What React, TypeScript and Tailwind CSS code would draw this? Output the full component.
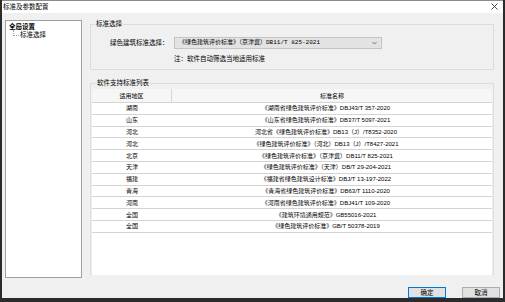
import React from "react";

// ── Data ───────────────────────────────────────────────────────────────────

const ROWS = [
  { area: "湖南", name: "《湖南省绿色建筑评价标准》DBJ43/T 357-2020" },
  { area: "山东", name: "《山东省绿色建筑评价标准》DB37/T 5097-2021" },
  { area: "河北", name: "河北省《绿色建筑评价标准》DB13（J）/T8352-2020" },
  { area: "河北", name: "《绿色建筑评价标准》（河北）DB13（J）/T8427-2021" },
  { area: "北京", name: "《绿色建筑评价标准》（京津冀）DB11/T 825-2021" },
  { area: "天津", name: "《绿色建筑评价标准》（天津）DB/T 29-204-2021" },
  { area: "福建", name: "《福建省绿色建筑设计标准》DBJ/T 13-197-2022" },
  { area: "青海", name: "《青海省绿色建筑评价标准》DB63/T 1110-2020" },
  { area: "河南", name: "《河南省绿色建筑评价标准》DBJ41/T 109-2020" },
  { area: "全国", name: "《建筑环境通用规范》GB55016-2021" },
  { area: "全国", name: "《绿色建筑评价标准》GB/T 50378-2019" },
];

// ── App ────────────────────────────────────────────────────────────────────

export default function App() {
  return (
    <div className="flex h-[302px] w-[505px] flex-col bg-[#2b2b2e] px-[2px] pb-[4px] font-['Noto_Sans','Noto_Sans_CJK_SC',sans-serif] text-[6.5px] leading-[8px] text-black">
      <div className="flex flex-1 flex-col border-t border-[#8a8a8a] bg-[#f0f0f0]">
        {/* ── Title bar ── */}
        <div className="flex h-[12px] items-center justify-between bg-white pl-[1px] pr-[5px]">
          <span>标准及参数配置</span>
          <svg width="7" height="7" viewBox="0 0 7 7" className="mb-[1px]">
            <path d="M0.5 0.5 L6.5 6.5 M6.5 0.5 L0.5 6.5" stroke="#333" strokeWidth="0.9" />
          </svg>
        </div>

        {/* ── Body ── */}
        <div className="flex pl-[3px] pt-[7px]">
          <TreePanel />

          <div className="ml-[8px] flex w-[404px] flex-col">
            <fieldset className="h-[50px] border border-[#dcdcdc]">
              <legend className="ml-[4px] px-[1px]">标准选择</legend>
              <div className="mt-[9px] flex items-center">
                <span className="ml-[19px] w-[64px]">绿色建筑标准选择：</span>
                <div className="flex h-[12px] w-[208px] items-center justify-between border border-[#c4c4c4] bg-[#e3e3e3] pl-[4px] pr-[4px]">
                  <span className="font-['Liberation_Mono','Noto_Sans_CJK_SC',monospace] text-[6px]">
                    《绿色建筑评价标准》（京津冀）DB11/T 825-2021
                  </span>
                  <svg width="5" height="4" viewBox="0 0 5 4">
                    <path d="M0.5 1 L2.5 3 L4.5 1" fill="none" stroke="#555" strokeWidth="0.8" />
                  </svg>
                </div>
              </div>
              <p className="ml-[83px] mt-[6px]">注：软件自动筛选当地适用标准</p>
            </fieldset>

            <fieldset className="mt-[9px] h-[196px] border border-[#dcdcdc] px-[1px] pb-[1px]">
              <legend className="ml-[4px] px-[1px]">软件支持标准列表</legend>
              <div className="mt-[2px] flex h-[186px] flex-col bg-white font-['Liberation_Sans','Noto_Sans_CJK_SC',sans-serif] text-[6px]">
                <div className="flex h-[14px] border-b border-[#d5d5d5] bg-[#f6f6f6]">
                  <div className="flex w-[80px] items-center justify-center border-r border-[#d5d5d5]">
                    适用地区
                  </div>
                  <div className="flex w-[320px] items-center justify-center">标准名称</div>
                </div>
                {ROWS.map((r, i) => (
                  <div key={i} className="flex h-[11.8px] border-b border-[#d4d4d4]">
                    <div className="flex w-[80px] items-center justify-center">{r.area}</div>
                    <div className="flex w-[308px] items-center justify-center">{r.name}</div>
                  </div>
                ))}
              </div>
            </fieldset>
          </div>
        </div>

        {/* ── Footer buttons ── */}
        <div className="mt-[9px] flex justify-end gap-[16px] pr-[3px]">
          <button className="h-[11px] w-[38px] border border-[#0078d7] bg-[#e1e1e1] leading-[8px]">
            确定
          </button>
          <button className="h-[11px] w-[38px] border border-[#adadad] bg-[#e1e1e1] leading-[8px]">
            取消
          </button>
        </div>
      </div>
    </div>
  );
}

// ── Tree ───────────────────────────────────────────────────────────────────

function TreePanel() {
  return (
    <div className="h-[258px] w-[77px] border border-[#a0a0a0] bg-white pl-[3px] pt-[2px]">
      <div className="font-bold">全局设置</div>
      <div className="flex items-center">
        <div className="ml-[4px] mt-[-4px] h-[6px] w-[6px] border-b border-l border-dotted border-[#a0a0a0]" />
        <span className="ml-[1px]">标准选择</span>
      </div>
    </div>
  );
}
